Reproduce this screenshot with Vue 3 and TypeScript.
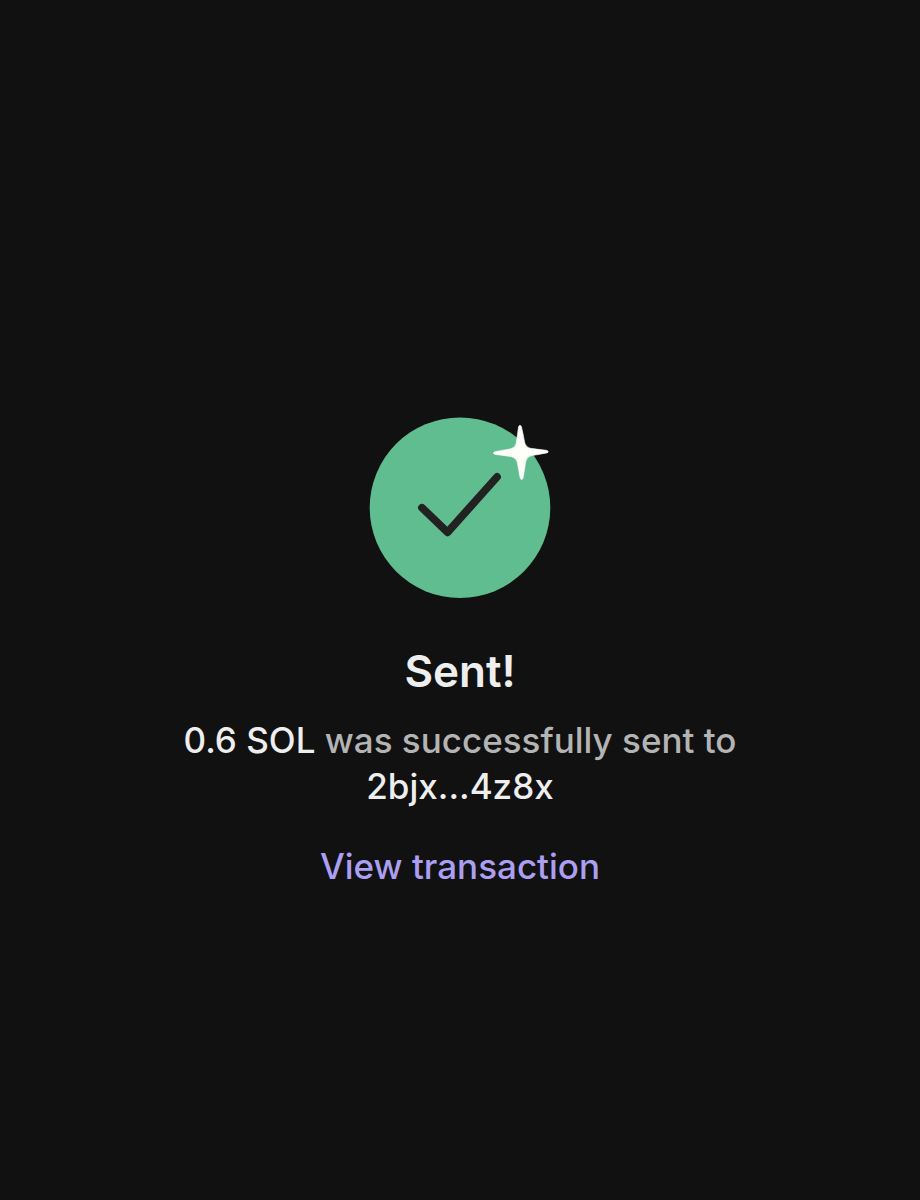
<script setup lang="ts">
const amount = '0.6 SOL'
const recipient = '2bjx...4z8x'
</script>

<template>
  <main class="screen">
    <svg class="status" viewBox="0 0 180 180" role="img" aria-label="Success">
      <circle cx="90" cy="89.700" r="90.300" fill="#60bd90" />
      <path d="M52 89.800 L77.500 114.300 L127 59" fill="none" stroke="#222222" stroke-width="7.800" stroke-linecap="round" stroke-linejoin="round" />
      <path
        d="M148.600 8.600 Q150 5.800 151.400 8.600 C153 14 153.500 20 154.800 25 Q156 29.500 160.500 30.300 C166 31.300 171.500 31.500 177 32.400 Q179.600 33.600 177 34.900 C171.500 36.100 166 36.600 161 37.800 Q156.600 39 155.700 43.500 C154.700 49 154.300 55 153 60.300 Q151.600 63.200 150.200 60.300 C149 55 148.400 49 147.200 44 Q146 39.800 141.500 38.700 C136 37.500 130.500 37.200 125 36.400 Q121.600 35 125 33.700 C130.500 32.400 136 32 141 30.700 Q145.500 29.500 146.300 25 C147.300 19.500 147.500 14 148.600 8.600 Z"
        fill="#fffffa" stroke="#fffffa" stroke-width="0.600"
      />
    </svg>
    <h1 class="title">Sent!</h1>
    <p class="message">
      <strong>{{ amount }}</strong> was successfully sent to <strong>{{ recipient }}</strong>
    </p>
    <a class="link" href="#transaction">View transaction</a>
  </main>
</template>

<style>
body {
  margin: 0;
  background: #111111;
}
</style>

<style scoped>
.screen {
  box-sizing: border-box;
  min-height: 100vh;
  padding: 418px 24px 40px;
  display: flex;
  flex-direction: column;
  align-items: center;
  background: #111111;
  color: #eeeeee;
  font-family: Inter, "Liberation Sans", sans-serif;
  font-weight: 500;
  text-align: center;
}

.status {
  width: 180px;
  height: 180px;
  overflow: visible;
}

.title {
  margin: 46px 0 19px;
  font-size: 44px;
  line-height: 54px;
  font-weight: 600;
}

.message {
  max-width: 580px;
  margin: 0 0 34px;
  color: #b4b4b4;
  font-size: 35px;
  line-height: 46px;
}

.message strong {
  color: #eeeeee;
  font-weight: 500;
}

.link {
  color: #ab9ff2;
  font-size: 35px;
  line-height: 46px;
  text-decoration: none;
}
</style>
